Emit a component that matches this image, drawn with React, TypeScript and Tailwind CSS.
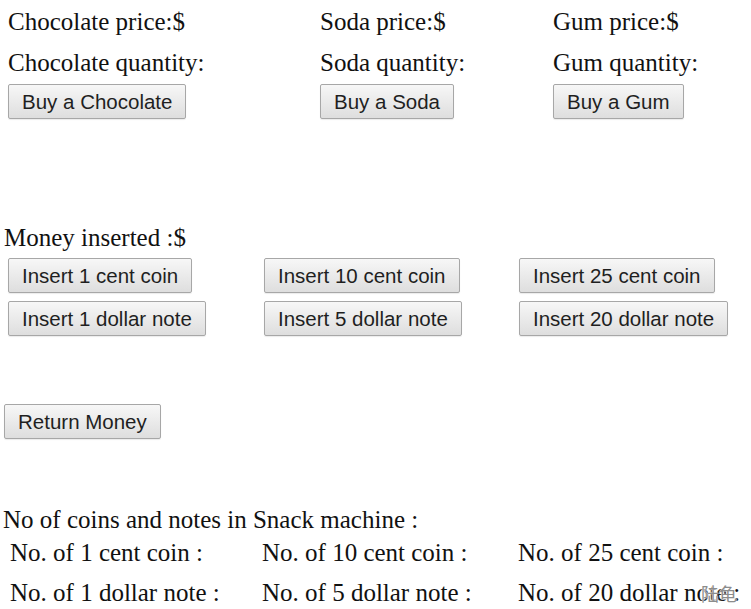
import React from "react";

const serif = { fontFamily: '"Liberation Serif", "Times New Roman", "DejaVu Serif", serif' };

function Btn({ children, className = "" }: { children: React.ReactNode; className?: string }) {
  return (
    <button
      className={`h-[35px] px-[13px] border border-[#a7a7a7] rounded-[2px] bg-gradient-to-b from-[#f7f7f7] to-[#dedede] text-[20.5px] leading-[23px] text-[#1f1f1f] shadow-[0_1px_1px_rgba(0,0,0,0.08)] whitespace-nowrap ${className}`}
      style={{ fontFamily: '"Liberation Sans", Arial, sans-serif' }}
    >
      {children}
    </button>
  );
}

const snacks = [
  { name: "Chocolate", w: "w-[312px]" },
  { name: "Soda", w: "w-[233px]" },
  { name: "Gum", w: "w-[190px]" },
];

const coins = [
  ["Insert 1 cent coin", "Insert 10 cent coin", "Insert 25 cent coin"],
  ["Insert 1 dollar note", "Insert 5 dollar note", "Insert 20 dollar note"],
];

const counts = [
  ["No. of 1 cent coin :", "No. of 10 cent coin :", "No. of 25 cent coin :"],
  ["No. of 1 dollar note :", "No. of 5 dollar note :", "No. of 20 dollar note :"],
];

export default function App() {
  return (
    <div className="relative w-[751px] h-[609px] overflow-hidden bg-white text-[25px] leading-[29px] text-[#111]" style={serif}>
      {/* snacks */}
      <div className="flex pl-[8px] pt-[7px]">
        {snacks.map((s) => (
          <div key={s.name} className={`flex flex-col items-start ${s.w}`}>
            <div className="h-[29px] whitespace-nowrap">{s.name} price:$</div>
            <div className="mt-[12px] h-[29px] whitespace-nowrap">{s.name} quantity:</div>
            <Btn className="mt-[7px]">Buy a {s.name}</Btn>
          </div>
        ))}
      </div>

      {/* money */}
      <div className="pl-[4px] mt-[104px] h-[29px]">Money inserted :$</div>
      <div className="flex flex-col gap-[8px] mt-[6px] pl-[8px]">
        {coins.map((row, i) => (
          <div key={i} className="flex">
            <div className="w-[256px]"><Btn>{row[0]}</Btn></div>
            <div className="w-[255px]"><Btn>{row[1]}</Btn></div>
            <div><Btn>{row[2]}</Btn></div>
          </div>
        ))}
      </div>

      <div className="pl-[4px] mt-[68px]">
        <Btn>Return Money</Btn>
      </div>

      {/* counts */}
      <div className="pl-[3px] mt-[66px] h-[29px] whitespace-nowrap">No of coins and notes in Snack machine :</div>
      <div className="flex flex-col gap-[11px] mt-[4px] pl-[10px]">
        {counts.map((row, i) => (
          <div key={i} className="flex h-[29px] whitespace-nowrap">
            <div className="w-[252px]">{row[0]}</div>
            <div className="w-[256px]">{row[1]}</div>
            <div>{row[2]}</div>
          </div>
        ))}
      </div>

      <div
        className="absolute left-[701px] top-[583px] text-[18px] leading-[20px] text-[#8c8c8c] [text-shadow:0_0_2px_#fff,0_0_1px_#fff]"
        style={{ fontFamily: '"Noto Sans CJK SC", sans-serif' }}
      >
        陆龟
      </div>
    </div>
  );
}
